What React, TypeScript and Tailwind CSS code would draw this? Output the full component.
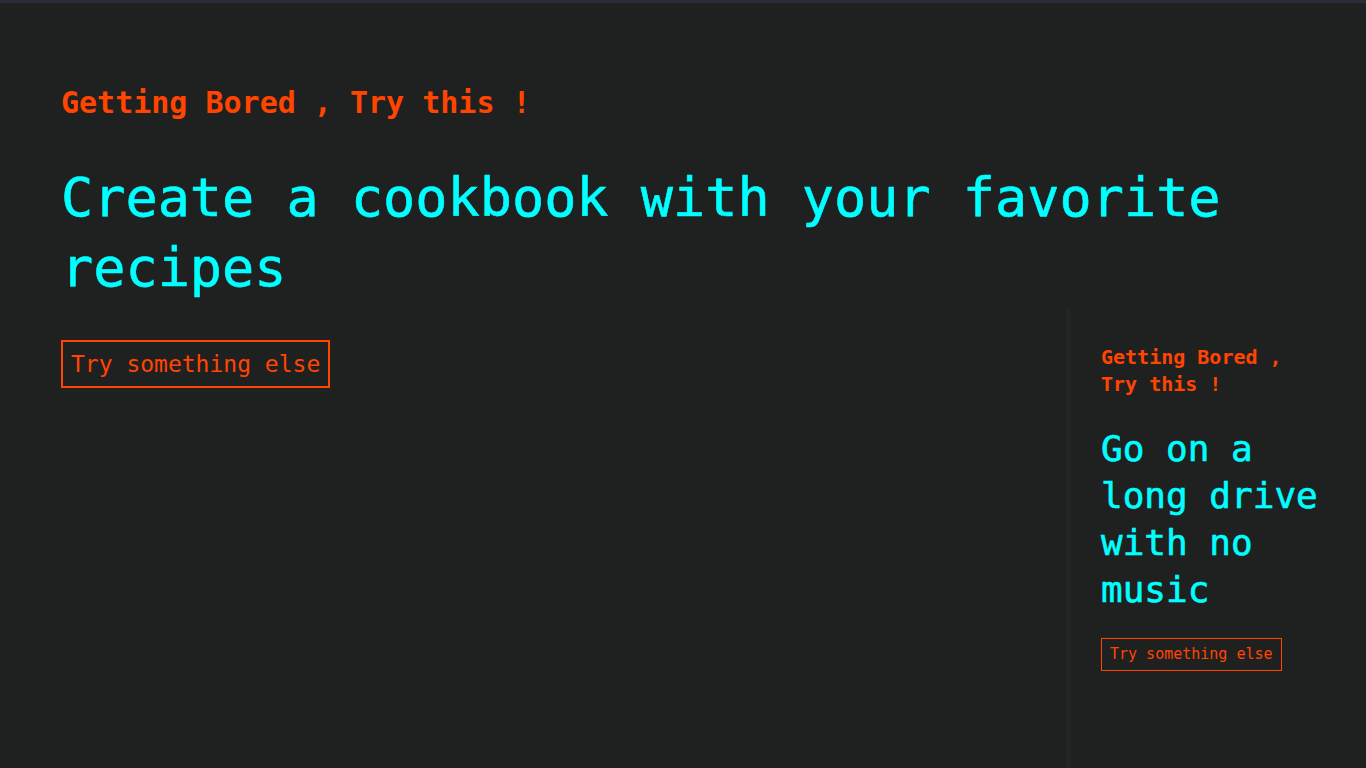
const mono = "font-['DejaVu_Sans_Mono','Liberation_Mono',monospace]";

export default function App() {
  return (
    <div className={`min-h-[768px] bg-[#1f2020] ${mono} flex flex-col`}>
      <div className="h-[3px] bg-[#2b2b3a]" />
      <div className="pl-[61px] pt-[82px]">
        <p className="text-[30px] leading-[36px] font-bold text-[#ff4500]">Getting Bored , Try this !</p>
        <h1 className="mt-[42px] text-[53.5px] leading-[70px] text-[#00ffff] [-webkit-text-stroke:0.6px_#00ffff]">
          Create a cookbook with your favorite recipes
        </h1>
      </div>
      <div className="flex flex-1 mt-[6px]">
        <div className="flex-1 pl-[61px] pt-[31px]">
          <button className="border-2 border-[#ff4500] px-[8px] py-[8px] text-[23px] leading-[28px] text-[#ff4500]">
            Try something else
          </button>
        </div>
        <aside className="w-[300px] border-l-[5px] border-[#232425] pl-[30px] pt-[35px]">
          <p className="w-[222px] text-[20px] leading-[27px] font-bold text-[#ff4500]">Getting Bored , Try this !</p>
          <h2 className="mt-[27px] w-[222px] text-[36px] leading-[47px] text-[#00ffff] [-webkit-text-stroke:0.6px_#00ffff]">
            Go on a long drive with no music
          </h2>
          <button className="mt-[25px] border border-[#ff4500] px-[8px] py-[6px] text-[15px] leading-[19px] text-[#ff4500]">
            Try something else
          </button>
        </aside>
      </div>
    </div>
  );
}
